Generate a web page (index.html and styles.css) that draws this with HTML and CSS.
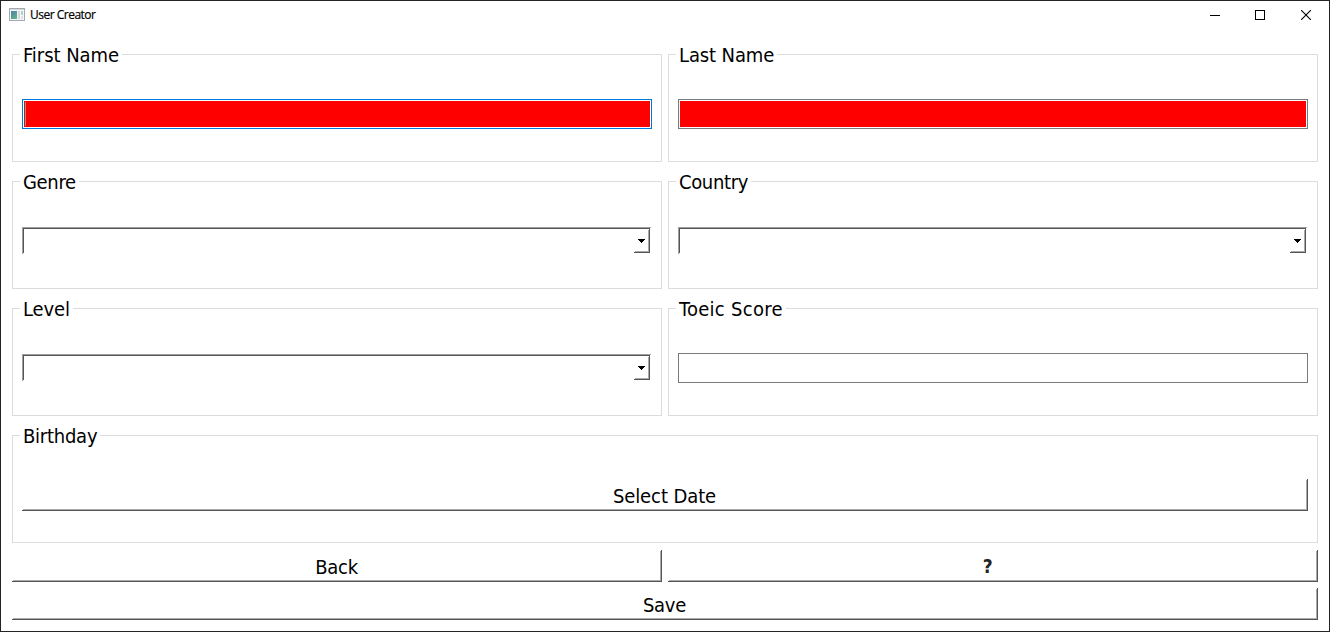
FILE: index.html
```html
<!DOCTYPE html>
<html lang="en">
<head>
<meta charset="utf-8">
<title>User Creator</title>
<link rel="stylesheet" href="styles.css">
</head>
<body>
<div class="window">
  <header class="titlebar">
    <svg class="app-icon" width="16" height="14" viewBox="0 0 16 14" shape-rendering="crispEdges">
      <defs><linearGradient id="pane" x1="0" y1="0" x2="0.6" y2="1"><stop offset="0" stop-color="#4f7fb5"/><stop offset="1" stop-color="#5fae86"/></linearGradient></defs>
      <rect x="0.5" y="0.5" width="15" height="12" fill="#f4f5f6" stroke="#a4a9ae"/>
      <rect x="1" y="1" width="14" height="1" fill="#d5dade"/>
      <rect x="2" y="3" width="6" height="8" fill="url(#pane)"/>
      <rect x="9" y="3" width="2" height="8" fill="#d3d8dc"/>
      <rect x="12" y="3" width="2" height="4" fill="#b6d4c6"/>
      <rect x="12" y="8" width="2" height="3" fill="#e0e3e6"/>
    </svg>
    <span class="title">User Creator</span>
    <div class="controls">
      <svg width="10" height="10" viewBox="0 0 10 10" shape-rendering="crispEdges"><path d="M0 5.5H10" stroke="#000"/></svg>
      <svg width="10" height="10" viewBox="0 0 10 10" shape-rendering="crispEdges"><rect x=".5" y=".5" width="9" height="9" fill="none" stroke="#000"/></svg>
      <svg width="10" height="10" viewBox="0 0 10 10"><path d="M0 0L10 10M10 0L0 10" stroke="#000" stroke-width="1.1"/></svg>
    </div>
  </header>
  <main class="form">
    <section class="group"><h2 class="legend first">First Name</h2><div class="field invalid focused"><span class="caret"></span></div></section>
    <section class="group"><h2 class="legend last">Last Name</h2><div class="field invalid"></div></section>
    <section class="group"><h2 class="legend genre">Genre</h2><div class="combo"><div class="drop"><svg width="7" height="4" viewBox="0 0 7 4" shape-rendering="crispEdges"><path d="M0 0H7V1H6V2H5V3H4V4H3V3H2V2H1V1H0Z"/></svg></div></div></section>
    <section class="group"><h2 class="legend country">Country</h2><div class="combo"><div class="drop"><svg width="7" height="4" viewBox="0 0 7 4" shape-rendering="crispEdges"><path d="M0 0H7V1H6V2H5V3H4V4H3V3H2V2H1V1H0Z"/></svg></div></div></section>
    <section class="group"><h2 class="legend level">Level</h2><div class="combo"><div class="drop"><svg width="7" height="4" viewBox="0 0 7 4" shape-rendering="crispEdges"><path d="M0 0H7V1H6V2H5V3H4V4H3V3H2V2H1V1H0Z"/></svg></div></div></section>
    <section class="group"><h2 class="legend score">Toeic Score</h2><div class="field"></div></section>
    <section class="group wide"><h2 class="legend birthday">Birthday</h2><button class="button select">Select Date</button></section>
  </main>
  <footer class="actions">
    <button class="button">Back</button>
    <button class="button help">?</button>
    <button class="button wide">Save</button>
  </footer>
</div>
</body>
</html>
```
FILE: styles.css
```css
* { box-sizing: border-box; }
body { margin: 0; }
svg { display: block; }
.window {
  width: 1330px;
  height: 632px;
  overflow: hidden;
  border: 1px solid #242426;
  background: #fff;
  color: #000;
  font: 20px/24px "DejaVu Sans Condensed", "DejaVu Sans", sans-serif;
  font-stretch: condensed;
}
.titlebar {
  display: flex;
  align-items: center;
  height: 29px;
  padding: 0 18px 2px 8px;
}
.title {
  margin-left: 5px;
  font: 12px/16px "Open Sans", "Noto Sans", sans-serif;
  letter-spacing: -0.5px;
  -webkit-text-stroke: 0.2px #000;
}
.controls { display: flex; gap: 36px; margin-left: auto; }
.controls svg:nth-child(2) { margin-right: -1px; margin-left: -1px; }
.controls svg:last-child { margin-left: 1px; }
.form {
  display: grid;
  grid-template-columns: 650px 650px;
  grid-auto-rows: 108px;
  gap: 19px 6px;
  padding: 24px 11px 0;
}
.group {
  display: flex;
  flex-direction: column;
  align-items: flex-start;
  padding: 0 9px;
  border: 1px solid #dcdcdc;
}
.wide { grid-column: 1 / -1; }
.legend {
  height: 24px;
  margin: -12px 0 0 -2px;
  padding: 0 3px;
  background: #fff;
  font-size: 20px;
  font-weight: 400;
  white-space: nowrap;
}
.first { letter-spacing: -0.05px; }
.last { letter-spacing: -0.12px; }
.genre, .country { letter-spacing: -0.35px; }
.level { letter-spacing: -0.1px; }
.score { letter-spacing: 0.3px; }
.birthday { letter-spacing: -0.25px; }
.field {
  width: 630px;
  height: 30px;
  margin-top: 32px;
  padding: 1px;
  border: 1px solid #7a7a7a;
}
.invalid { background: #f00 content-box; }
.focused { border-color: #0078d7; }
.caret { display: block; width: 1px; height: 24px; margin: 1px 0 0 1px; background: #6aa; }
.combo {
  display: flex;
  justify-content: flex-end;
  width: 629px;
  height: 27px;
  margin-top: 33px;
  padding-right: 1px;
  border-top: 1px solid #a0a0a0;
  border-left: 1px solid #a0a0a0;
  background: linear-gradient(#555, #555) 0 0 / 627px 1px no-repeat, linear-gradient(#555, #555) 0 0 / 1px 25px no-repeat;
}
.drop {
  width: 16px;
  height: 25px;
  padding: 11px 0 0 4px;
  border-right: 1px solid #555;
  border-bottom: 1px solid #555;
  background: linear-gradient(#aaa, #aaa) 100% 2px / 1px 22px no-repeat, linear-gradient(#aaa, #aaa) 1px 100% / 14px 1px no-repeat;
}
.button {
  height: 32px;
  padding: 2px 0 0;
  border: 0;
  border-right: 1px solid #555;
  border-bottom: 1px solid #555;
  background: linear-gradient(#aaa, #aaa) 100% 1px / 1px 100% no-repeat, linear-gradient(#aaa, #aaa) 1px 100% / 100% 1px no-repeat;
  color: inherit;
  font: inherit;
  letter-spacing: -0.25px;
}
.select { width: 1286px; margin-top: 31px; letter-spacing: -0.1px; }
.help { padding: 1px 10px 0 0; font-weight: 700; font-size: 19px; color: #222; }
.actions {
  display: grid;
  grid-template-columns: 650px 650px;
  gap: 6px;
  padding: 7px 11px 0;
}
```
